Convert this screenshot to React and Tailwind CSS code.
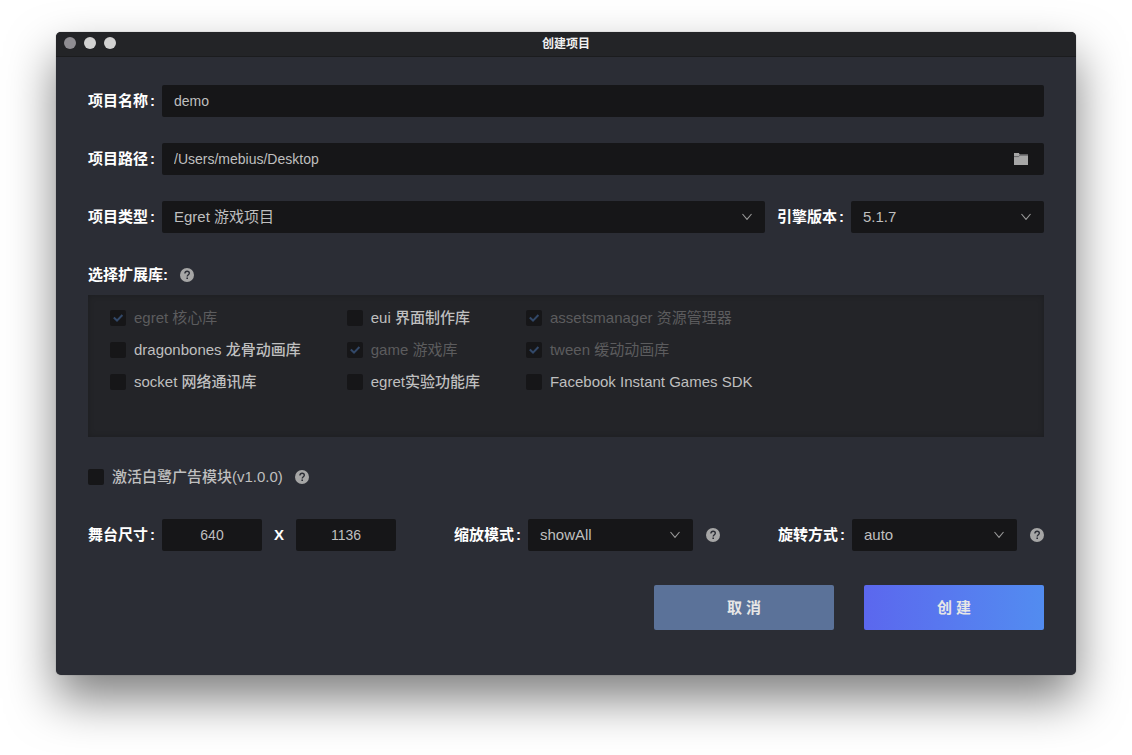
import React, { useState } from 'react';

const LIBRARIES = [
    { id: 'egret', label: 'egret 核心库', locked: true },
    { id: 'eui', label: 'eui 界面制作库' },
    { id: 'assetsmanager', label: 'assetsmanager 资源管理器', locked: true },
    { id: 'dragonbones', label: 'dragonbones 龙骨动画库' },
    { id: 'game', label: 'game 游戏库', locked: true },
    { id: 'tween', label: 'tween 缓动动画库', locked: true },
    { id: 'socket', label: 'socket 网络通讯库' },
    { id: 'experimental', label: 'egret实验功能库' },
    { id: 'facebook', label: 'Facebook Instant Games SDK' },
];

const inputClass = 'h-8 rounded-xs bg-[#161618] text-sm text-[#bfbfbf] outline-none';

const Label = ({ htmlFor, children }) => (
    <label htmlFor={htmlFor} className="mr-[7px] shrink-0 font-bold text-white">
        {children}<span className="ml-0.5">:</span>
    </label>
);

const Help = ({ className = '' }) => (
    <svg className={`size-3.5 shrink-0 ${className}`} viewBox="0 0 14 14">
        <circle cx="7" cy="7" r="7" fill="#a6a6a6" />
        <path d="M4.9 5.5 C4.9 4.1 5.8 3.3 7.1 3.3 C8.4 3.3 9.3 4.1 9.3 5.2 C9.3 6.7 7.2 6.7 7.2 8.5" fill="none" stroke="#2b2d35" strokeWidth="1.4" />
        <rect x="6.4" y="9.5" width="1.6" height="1.5" fill="#2b2d35" />
    </svg>
);

const Select = ({ id, options, className }) => (
    <div className={`relative ${className}`}>
        <select id={id} className="h-8 w-full appearance-none rounded-xs bg-[#161618] pr-8 pl-3 text-[15px] text-[#bfbfbf] outline-none">
            {options.map(o => <option key={o}>{o}</option>)}
        </select>
        <svg className="pointer-events-none absolute top-2.5 right-3 size-3" viewBox="0 0 12 12" fill="none" stroke="#9a9a9a" strokeWidth="1.1">
            <path d="M1.5 3 L6 8.3 L10.5 3" />
        </svg>
    </div>
);

const Checkbox = ({ label, locked, checked, onChange }) => (
    <label className={`flex items-center gap-2 ${locked ? 'text-[#5c5c5e]' : 'font-medium text-[#bfbfbf]'}`}>
        <span className="relative flex size-4 shrink-0">
            <input type="checkbox" checked={checked} disabled={locked} onChange={onChange} className="size-4 appearance-none rounded-xs bg-[#161618]" />
            {checked && (
                <svg className="pointer-events-none absolute inset-0 size-4" viewBox="0 0 16 16" fill="none" stroke="#324868" strokeWidth="2">
                    <path d="M3.8 7.6 L7 10.6 L12.4 5" />
                </svg>
            )}
        </span>
        {label}
    </label>
);

const App = () => {
    const [name, setName] = useState('demo');
    const [path, setPath] = useState('/Users/mebius/Desktop');
    const [width, setWidth] = useState('640');
    const [height, setHeight] = useState('1136');
    const [adModule, setAdModule] = useState(false);
    const [selected, setSelected] = useState(LIBRARIES.filter(l => l.locked).map(l => l.id));

    const toggle = (id) => {
        setSelected(selected.includes(id) ? selected.filter(s => s !== id) : [...selected, id]);
    };

    return (
        <div className="min-h-screen bg-white px-14 py-8 font-['Liberation_Sans','Noto_Sans_CJK_SC',sans-serif] text-[15px] leading-5">
            <div className="overflow-hidden rounded-[5px] bg-[#2b2d35] shadow-[0_0_1px_rgba(0,0,0,0.5),0_24px_48px_rgba(0,0,0,0.5)]">
                <header className="flex h-[25px] items-center border-b border-[#1b1c1e] bg-[#232427] px-2">
                    <div className="flex flex-1 gap-2 pb-0.5">
                        <span className="size-3 rounded-full bg-[#8f8d92]"></span>
                        <span className="size-3 rounded-full bg-[#d2d2d2]"></span>
                        <span className="size-3 rounded-full bg-[#d2d2d2]"></span>
                    </div>
                    <h1 className="text-xs font-bold text-[#f0f0f0]">创建项目</h1>
                    <div className="flex-1"></div>
                </header>

                <form className="px-8 pt-7 pb-[45px]" onSubmit={e => e.preventDefault()}>
                    <div className="flex flex-col gap-[26px]">
                        <div className="flex items-center">
                            <Label htmlFor="name">项目名称</Label>
                            <input id="name" value={name} onChange={e => setName(e.target.value)} className={`${inputClass} min-w-0 flex-1 px-3`} />
                        </div>

                        <div className="flex items-center">
                            <Label htmlFor="path">项目路径</Label>
                            <div className="relative flex min-w-0 flex-1">
                                <input id="path" value={path} onChange={e => setPath(e.target.value)} className={`${inputClass} w-full pr-10 pl-3`} />
                                <button type="button" aria-label="项目路径" className="absolute top-2 right-4 flex h-4 items-center">
                                    <svg className="h-3 w-3.5" viewBox="0 0 14 12">
                                        <path d="M0 0 H4.8 L5.8 1.5 H14 V12 H0 Z" fill="#a6a6a6" />
                                        <path d="M0 3.6 H4.6 L5.8 2.2 H14" fill="none" stroke="#5e5f62" strokeWidth="0.9" />
                                    </svg>
                                </button>
                            </div>
                        </div>

                        <div className="flex items-center">
                            <Label htmlFor="type">项目类型</Label>
                            <Select id="type" options={['Egret 游戏项目']} className="mr-3 min-w-0 flex-1" />
                            <Label htmlFor="engine">引擎版本</Label>
                            <Select id="engine" options={['5.1.7']} className="w-[193px]" />
                        </div>
                    </div>

                    <fieldset className="mt-8">
                        <legend className="flex items-center font-bold text-white">
                            选择扩展库:
                            <Help className="ml-3" />
                        </legend>
                        <div className="mt-2.5 grid min-h-[142px] grid-cols-[repeat(3,max-content)] content-start gap-x-[46px] gap-y-3 bg-[#232428] px-[22px] py-[13px] shadow-[inset_0_0_6px_rgba(0,0,0,0.2)]">
                            {LIBRARIES.map(lib => (
                                <Checkbox
                                    key={lib.id}
                                    label={lib.label}
                                    locked={lib.locked}
                                    checked={selected.includes(lib.id)}
                                    onChange={() => toggle(lib.id)}
                                />
                            ))}
                        </div>
                    </fieldset>

                    <div className="mt-[30px] flex items-center">
                        <Checkbox label="激活白鹭广告模块(v1.0.0)" checked={adModule} onChange={() => setAdModule(!adModule)} />
                        <Help className="ml-3" />
                    </div>

                    <div className="mt-8 flex items-center justify-between">
                        <div className="flex items-center">
                            <Label htmlFor="width">舞台尺寸</Label>
                            <input id="width" value={width} onChange={e => setWidth(e.target.value)} className={`${inputClass} w-[100px] text-center`} />
                            <span className="w-[34px] text-center font-bold text-white">X</span>
                            <input id="height" aria-label="高度" value={height} onChange={e => setHeight(e.target.value)} className={`${inputClass} w-[100px] text-center`} />
                        </div>
                        <div className="flex items-center">
                            <Label htmlFor="scale">缩放模式</Label>
                            <Select id="scale" options={['showAll']} className="w-[165px]" />
                            <Help className="ml-[13px]" />
                        </div>
                        <div className="flex items-center">
                            <Label htmlFor="rotate">旋转方式</Label>
                            <Select id="rotate" options={['auto']} className="w-[165px]" />
                            <Help className="ml-[13px]" />
                        </div>
                    </div>

                    <div className="mt-[34px] flex justify-end gap-[30px] font-bold text-[#e6e6e6]">
                        <button type="button" className="h-[45px] w-[180px] rounded-xs bg-[#5b7299]">取 消</button>
                        <button type="submit" className="h-[45px] w-[180px] rounded-xs bg-linear-to-r from-[#5b67ee] to-[#528cf0]">创 建</button>
                    </div>
                </form>
            </div>
        </div>
    );
};

export default App;
